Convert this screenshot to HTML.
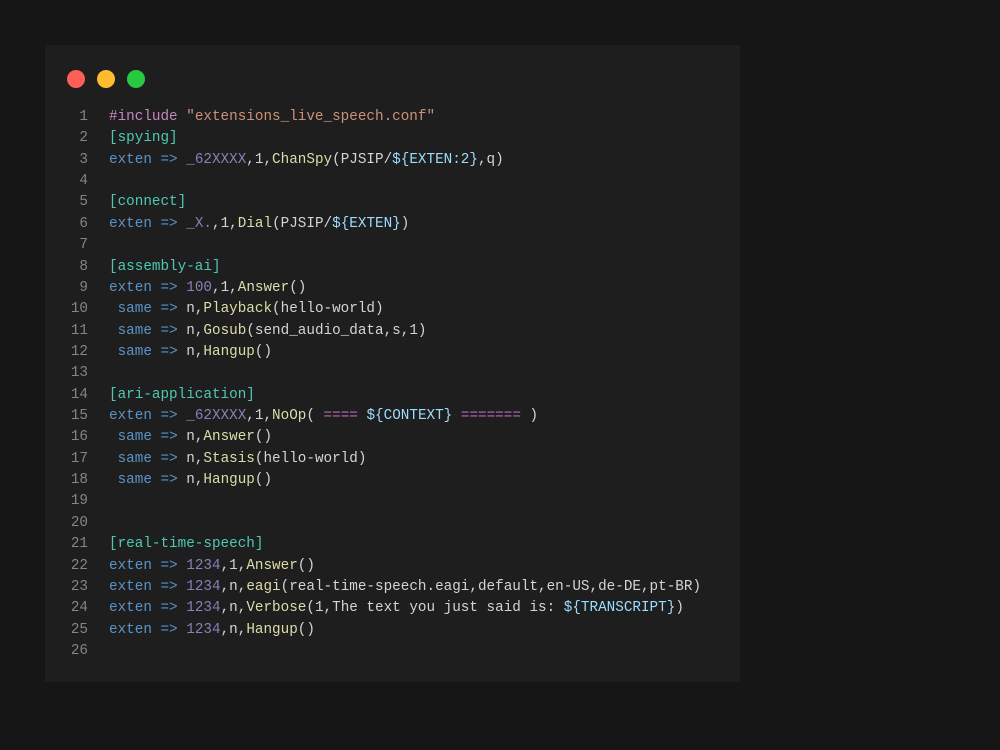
<!DOCTYPE html>
<html><head><style>
body{margin:0;background:#161616;width:1000px;height:750px;overflow:hidden;}
.panel{position:absolute;left:45px;top:45px;width:695px;height:637px;background:#1e1e1e;}
.dot{position:absolute;top:70px;width:18px;height:18px;border-radius:50%;}
pre{position:absolute;margin:0;font-family:"Liberation Mono",monospace;font-size:14.3px;line-height:21.36px;color:#d4d4d4;}
.ln{left:60px;width:28px;text-align:right;color:#858585;top:107px;}
.code{left:109px;top:107px;}
.k{color:#5a93c8}.p{color:#8a7fb8}.f{color:#dcdcaa}.t{color:#4ec9b0}.s{color:#ce9178}.i{color:#c586c0}.v{color:#9cdcfe}.e{color:#b56ab5}
</style></head><body>
<div class="panel"></div>
<div class="dot" style="left:67px;background:#fe5f57"></div>
<div class="dot" style="left:97px;background:#febc2e"></div>
<div class="dot" style="left:127px;background:#28c840"></div>
<pre class="ln">1
2
3
4
5
6
7
8
9
10
11
12
13
14
15
16
17
18
19
20
21
22
23
24
25
26</pre>
<pre class="code"><span class="i">#include</span> <span class="s">"extensions_live_speech.conf"</span>
<span class="t">[spying]</span>
<span class="k">exten =&gt;</span> <span class="p">_62XXXX</span>,1,<span class="f">ChanSpy</span>(PJSIP/<span class="v">${EXTEN:2}</span>,q)

<span class="t">[connect]</span>
<span class="k">exten =&gt;</span> <span class="p">_X.</span>,1,<span class="f">Dial</span>(PJSIP/<span class="v">${EXTEN}</span>)

<span class="t">[assembly-ai]</span>
<span class="k">exten =&gt;</span> <span class="p">100</span>,1,<span class="f">Answer</span>()
 <span class="k">same =&gt;</span> n,<span class="f">Playback</span>(hello-world)
 <span class="k">same =&gt;</span> n,<span class="f">Gosub</span>(send_audio_data,s,1)
 <span class="k">same =&gt;</span> n,<span class="f">Hangup</span>()

<span class="t">[ari-application]</span>
<span class="k">exten =&gt;</span> <span class="p">_62XXXX</span>,1,<span class="f">NoOp</span>( <span class="e">====</span> <span class="v">${CONTEXT}</span> <span class="e">=======</span> )
 <span class="k">same =&gt;</span> n,<span class="f">Answer</span>()
 <span class="k">same =&gt;</span> n,<span class="f">Stasis</span>(hello-world)
 <span class="k">same =&gt;</span> n,<span class="f">Hangup</span>()


<span class="t">[real-time-speech]</span>
<span class="k">exten =&gt;</span> <span class="p">1234</span>,1,<span class="f">Answer</span>()
<span class="k">exten =&gt;</span> <span class="p">1234</span>,n,<span class="f">eagi</span>(real-time-speech.eagi,default,en-US,de-DE,pt-BR)
<span class="k">exten =&gt;</span> <span class="p">1234</span>,n,<span class="f">Verbose</span>(1,The text you just said is: <span class="v">${TRANSCRIPT}</span>)
<span class="k">exten =&gt;</span> <span class="p">1234</span>,n,<span class="f">Hangup</span>()
</pre>
</body></html>
